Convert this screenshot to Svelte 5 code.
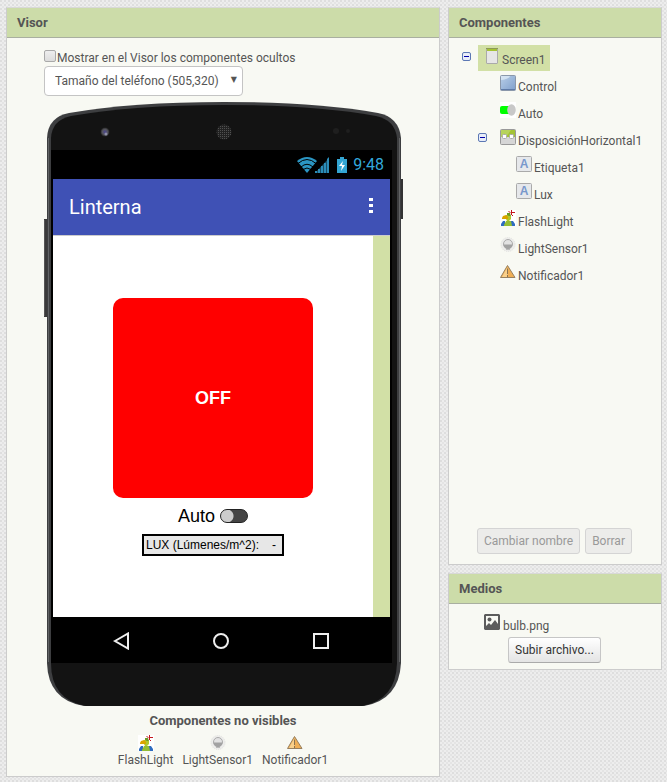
<script>
  let showHidden = $state(false);
  const tree = [
    { name: 'Screen1', icon: 'screen', level: 0, open: true, selected: true },
    { name: 'Control', icon: 'button', level: 1 },
    { name: 'Auto', icon: 'switch', level: 1 },
    { name: 'DisposiciónHorizontal1', icon: 'layout', level: 1, open: true },
    { name: 'Etiqueta1', icon: 'label', level: 2 },
    { name: 'Lux', icon: 'label', level: 2 },
    { name: 'FlashLight', icon: 'flash', level: 1 },
    { name: 'LightSensor1', icon: 'sensor', level: 1 },
    { name: 'Notificador1', icon: 'notifier', level: 1 }
  ];
  const hiddenParts = tree.slice(6);
</script>

{#snippet icon(kind)}
  <svg class="icon" width="16" height="16" viewBox="0 0 16 16" aria-hidden="true">
    {#if kind === 'screen'}
      <rect x="2.5" y=".5" width="11" height="15" rx=".5" fill="#e6e6e6" stroke="#aaa" />
      <rect x="2" y="0" width="12" height="1" fill="#8c9a55" />
      <rect x="3" y="1" width="10" height="2" fill="#a4c334" />
    {:else if kind === 'button'}
      <defs>
        <linearGradient id="blue" x1="0" y1="0" x2="1" y2="1">
          <stop offset="0" stop-color="#b9cfe8" /><stop offset="1" stop-color="#7f9fcc" />
        </linearGradient>
      </defs>
      <rect x=".5" y=".5" width="15" height="15" rx="1" fill="url(#blue)" stroke="#8a97aa" />
      <path d="M1 1h9Q9 4 1 5z" fill="#dce8f5" opacity=".8" />
      <path d="M1 14.500h14" stroke="#5f7ba8" />
    {:else if kind === 'switch'}
      <rect width="16" height="16" fill="#fff" />
      <rect x="0" y="4" width="12" height="8" rx="2" fill="#0f0" />
      <ellipse cx="11.500" cy="8" rx="4.300" ry="5.800" fill="#c8c8c8" />
    {:else if kind === 'layout'}
      <rect x=".5" y=".5" width="15" height="15" rx="1" fill="#d6d6d6" stroke="#999" />
      <path d="M1 1h14v7H1z" fill="#a4c334" />
      <path d="M1 1h10L6 8H1z" fill="#b7d35c" />
      <rect x="2.500" y="5.500" width="4" height="4" rx="1" fill="#fff" stroke="#aaa" />
      <rect x="9.500" y="5.500" width="4" height="4" rx="1" fill="#fff" stroke="#aaa" />
    {:else if kind === 'label'}
      <rect x=".5" y=".5" width="15" height="15" rx="1" fill="#e6e8eb" stroke="#aaa" />
      <text x="8" y="12" text-anchor="middle" class="glyph">A</text>
    {:else if kind === 'flash'}
      <rect width="16" height="16" fill="#fff" />
      <path d="M1 16v-2l2-3 2 0v5zM11 16v-5h2l2 3v2z" fill="#2f6cc0" />
      <path d="M4 16v-1l2-4h5l1 5z" fill="#93bd33" />
      <path d="M6 5h3l2 1v3l-2 2H7L6 9z" fill="#b0c82c" />
      <path d="M3 6l3-1 2 2v2H2V8z" fill="#d9a400" />
      <path d="M7 3h3l1 3H9L7 5z" fill="#6b9b28" />
      <path d="M8.500 1.500l2 1M11.500 4V0M12 2.500h3M11 4l2 2" stroke="#c4161c" fill="none" />
    {:else if kind === 'sensor'}
      <circle cx="8" cy="7.500" r="7" fill="#ededeb" stroke="#e2e2e0" stroke-dasharray="1 1" />
      <circle cx="8" cy="7" r="4.500" fill="#e2e2e2" stroke="#aaa" />
      <path d="M3.500 7.500h9a4.500 4.500 0 0 1-9 0z" fill="#a2a2a2" />
      <path d="M6 12.500h4" stroke="#bbb" />
    {:else}
      <path d="M7.500 1.500L15 13.500H.5z" fill="#efae55" stroke="#97805f" stroke-linejoin="round" />
      <path d="M7.500 3v10H2z" fill="#f9d08b" />
      <path d="M7.500 4.500v5.500M7.500 11v2" stroke="#8a7350" />
    {/if}
  </svg>
{/snippet}

<div class="page">
  <section class="panel visor">
    <h2>Visor</h2>
    <div class="viewer">
      <label class="toggle"><input type="checkbox" bind:checked={showHidden} />Mostrar en el Visor los componentes ocultos</label>
      <div class="size">
        <select aria-label="Tamaño">
          <option>Tamaño del teléfono (505,320)</option>
        </select>
      </div>

      <div class="phone">
        <svg class="shell" width="359" height="605" viewBox="0 0 359 605" aria-hidden="true">
          <defs>
            <radialGradient id="lens"><stop offset="0" stop-color="#4a4590" /><stop offset=".6" stop-color="#55555c" /><stop offset="1" stop-color="#222" /></radialGradient>
            <pattern id="mesh" width="2" height="2" patternUnits="userSpaceOnUse"><rect width="2" height="2" fill="#222" /><rect width="1" height="1" fill="#505050" /></pattern>
          </defs>
          <rect x="0" y="117" width="5" height="98" fill="#3a3a3a" />
          <rect x="0" y="118" width="1" height="96" fill="#555" />
          <rect x="355" y="77" width="4" height="40" fill="#333" />
          <path d="M3 36Q4 15 25 11Q88 0 180 0Q272 0 334 11Q355 15 357 36V561Q355 598 320 604H40Q4 598 3 561Z" fill="#3d3e40" />
          <path d="M7 36Q8 18 27 14Q90 3 180 3Q270 3 332 14Q351 18 353 36V561Q352 598 318 604H42Q7 598 7 561Z" fill="#131313" />
          <path d="M4.500 36V560M355.500 36V560" stroke="#626466" />
          <circle cx="61" cy="30" r="4.500" fill="url(#lens)" />
          <circle cx="62" cy="32" r="1.500" fill="#8e8ea8" />
          <circle cx="180" cy="30" r="7.500" fill="url(#mesh)" />
          <circle cx="292" cy="29" r="3" fill="#1f1f1f" />
          <circle cx="304" cy="29" r="2" fill="#1f1f1f" />
        </svg>

        <div class="display">
          <div class="status">
            <svg width="52" height="18" viewBox="0 0 52 18" aria-hidden="true">
              <path d="M0 5Q10-3 20 5L10 17z" fill="#2b95c2" />
              <path d="M1 7.500Q10-.5 19 7.500M4 11Q10 5.500 16 11M6 13.500Q10 10.500 14 13.500" fill="none" stroke="#000" />
              <path d="M18 17v-2h2v2zM21 17v-4h2v4zM24 17v-7h2v7zM27 17V7h2v10zM30 17V3l2-2v16z" fill="#2b8db8" />
              <path d="M18 17L32 2v15z" fill="#2b8db8" opacity=".55" />
              <path d="M40 3h3V1h4v2h3v14H40z" fill="#33a5d2" />
              <path d="M46 5l-4 5h3l-1 5 4-6h-3z" fill="#fff" />
            </svg>
            <span>9:48</span>
          </div>
          <div class="appbar">
            <span>Linterna</span>
            <button class="more" aria-label="Menú"><i></i><i></i><i></i></button>
          </div>
          <div class="canvas">
            <div class="content">
              <button class="off">OFF</button>
              <label class="auto">Auto <input type="checkbox" class="switch" /></label>
              <div class="lux"><span>LUX (Lúmenes/m^2):</span><span>-</span></div>
            </div>
            <div class="track"></div>
          </div>
          <div class="nav">
            <svg width="18" height="18" viewBox="0 0 18 18" aria-hidden="true"><path d="M3 9L16 1.500V16.500z" /></svg>
            <svg width="18" height="18" viewBox="0 0 18 18" aria-hidden="true"><circle cx="9" cy="9" r="7" /></svg>
            <svg width="18" height="18" viewBox="0 0 18 18" aria-hidden="true"><rect x="2" y="2" width="14" height="14" /></svg>
          </div>
        </div>
      </div>
    </div>

    <div class="hidden-parts">
      <h3>Componentes no visibles</h3>
      <ul>
        {#each hiddenParts as part}
          <li>{@render icon(part.icon)}<span>{part.name}</span></li>
        {/each}
      </ul>
    </div>
  </section>

  <div class="side">
    <section class="panel components">
      <h2>Componentes</h2>
      <ul class="tree">
        {#each tree as node}
          <li class="level{node.level}">
            {#if node.open}
              <button class="fold" aria-label="Contraer {node.name}"></button>
            {/if}
            <span class="node" class:selected={node.selected}>{@render icon(node.icon)}<span>{node.name}</span></span>
          </li>
        {/each}
      </ul>
      <div class="actions">
        <button class="btn" disabled>Cambiar nombre</button>
        <button class="btn" disabled>Borrar</button>
      </div>
    </section>

    <section class="panel media">
      <h2>Medios</h2>
      <div class="file">
        <svg width="16" height="16" viewBox="0 0 16 16" aria-hidden="true">
          <path fill-rule="evenodd" d="M1 0h14l1 1v14l-1 1H1l-1-1V1zM2 2v12h12V2z" fill="#5c5c5c" />
          <path d="M2 12l3-3 2 2 4-5 3 4v5H2z" fill="#5c5c5c" />
          <circle cx="5.500" cy="5.500" r="2" fill="#5c5c5c" />
        </svg>
        <span>bulb.png</span>
      </div>
      <button class="btn upload">Subir archivo...</button>
    </section>
  </div>
</div>

<style>
  :global(body) {
    background-color: #ededed;
    background-image:
      radial-gradient(circle at 1px 1px, #dedede 1px, transparent 1px),
      radial-gradient(circle at 3px 3px, #e4e4e4 1px, transparent 1px);
    background-size: 4px 4px;
  }
  .page {
    display: flex;
    align-items: flex-start;
    gap: 8px;
    padding: 7px 5px 5px 6px;
    color: #555;
    font: 12px/16px Roboto, sans-serif;
  }
  .page * { box-sizing: border-box; }
  button, select { font: inherit; color: inherit; }
  ul { list-style: none; margin: 0; padding: 0; }
  .icon, svg { display: block; flex: none; }
  .panel {
    background: #f8f9f3;
    border: 1px solid #ccc;
    border-top-color: #d8d8d8;
  }
  h2 {
    margin: 0;
    padding: 7px 10px;
    background: #ccdca9;
    border-bottom: 1px solid #a9afa0;
    font-size: 13px;
    line-height: 15px;
    font-weight: 700;
  }
  .visor { flex: 1; min-width: 0; }
  .viewer { padding: 12px 0 0 37px; }
  .toggle { display: flex; height: 16px; }
  .toggle input {
    appearance: none;
    width: 12px;
    height: 12px;
    margin: 0 1px 0 0;
    border: 1px solid #a9a9a9;
    border-radius: 2px;
    background: linear-gradient(#eee, #dcdcdc);
  }
  .size { position: relative; width: 199px; }
  .size::after {
    content: '▼';
    position: absolute;
    right: 6px;
    top: 6px;
    font: 8px/16px "DejaVu Sans", sans-serif;
    pointer-events: none;
  }
  select {
    display: block;
    width: 100%;
    height: 30px;
    padding: 0 10px;
    appearance: none;
    background: #fff;
    border: 1px solid #c4c4c4;
    border-radius: 4px;
  }
  .phone {
    position: relative;
    width: 359px;
    margin-top: 6px;
    padding: 48px 11px 43px 7px;
  }
  .shell { position: absolute; left: 0; top: 0; }
  .display {
    position: relative;
    background: #000;
    padding: 0 2px;
  }
  .status {
    display: flex;
    align-items: center;
    justify-content: flex-end;
    gap: 4px;
    height: 29px;
    padding-right: 6px;
    color: #33a9dc;
    font-size: 16px;
  }
  .appbar {
    display: flex;
    align-items: center;
    justify-content: space-between;
    height: 57px;
    padding: 0 17px 0 16px;
    background: #3f51b5;
    border-bottom: 1px solid #ccc;
    color: #fff;
    font-size: 20px;
    line-height: 24px;
  }
  .more {
    display: flex;
    flex-direction: column;
    gap: 3px;
    padding: 0 0 3px;
    border: 0;
    background: none;
  }
  .more i { width: 4px; height: 3px; background: #fff; }
  .canvas { display: flex; background: #fff; }
  .content {
    flex: 1;
    display: flex;
    flex-direction: column;
    align-items: center;
    padding: 62px 0 61px;
    color: #000;
    font-family: "Liberation Sans", Arial, sans-serif;
  }
  .track { width: 17px; background: #d2e0a6; }
  .off {
    width: 200px;
    height: 200px;
    border: 0;
    border-radius: 10px;
    background: #f00;
    color: #fff;
    font-size: 18px;
    font-weight: 700;
  }
  .auto {
    display: flex;
    align-items: center;
    gap: 5px;
    height: 36px;
    font-size: 18px;
  }
  .switch {
    appearance: none;
    width: 28px;
    height: 14px;
    margin: 0;
    border: 1px solid #222;
    border-radius: 7px;
    background: radial-gradient(circle at 6px 6px, #ccc 6px, #444 7px);
  }
  .lux {
    display: flex;
    justify-content: space-between;
    width: 142px;
    height: 22px;
    padding: 1px 6px 0 2px;
    border: 2px solid #000;
    background: #e7e7e7;
  }
  .nav {
    display: flex;
    justify-content: space-between;
    align-items: center;
    height: 46px;
    padding: 2px 60px 0 59px;
  }
  .nav svg { fill: none; stroke: #eee; stroke-width: 2; }
  .hidden-parts { padding: 6px 0 8px; text-align: center; }
  h3 { margin: 0; font-size: 13px; line-height: 17px; font-weight: 700; }
  .hidden-parts ul { display: flex; justify-content: center; gap: 9px; margin-top: 6px; }
  .hidden-parts li { display: flex; flex-direction: column; align-items: center; gap: 1px; }
  .side { flex: none; width: 214px; display: flex; flex-direction: column; gap: 8px; }
  .components { min-height: 558px; display: flex; flex-direction: column; }
  .tree { flex: 1; padding: 7px 0 0 13px; }
  .tree li { display: flex; align-items: flex-start; gap: 7px; height: 27px; }
  .level1 { padding-left: 32px; }
  .level2 { padding-left: 48px; }
  .level1:has(.fold) { padding-left: 16px; }
  .fold {
    flex: none;
    width: 9px;
    height: 9px;
    margin-top: 7px;
    padding: 0;
    border: 1px solid #5c78b4;
    border-radius: 2px;
    background: linear-gradient(#0000a8, #0000a8) center / 5px 1px no-repeat, #e8edf8;
  }
  .node { display: flex; gap: 2px; height: 26px; padding: 3px 5px 0 6px; }
  .node > span { padding-top: 4px; white-space: nowrap; }
  .selected { background: #d2e0a6; }
  .glyph { font: 700 12px "Liberation Sans", sans-serif; fill: #7898cc; }
  .actions { display: flex; gap: 5px; padding: 0 28px 10px; }
  .btn {
    height: 26px;
    padding: 0 6px;
    border: 1px solid #c6c6c6;
    border-bottom-color: #aaa;
    border-radius: 3px;
    background: linear-gradient(#fff, #e4e4e4);
    color: #333;
    white-space: nowrap;
  }
  .btn:disabled { background: #ececea; border-color: #d4d4d4; color: #999; }
  .file { display: flex; gap: 3px; padding: 10px 0 0 35px; height: 33px; }
  .file span { padding-top: 4px; }
  .upload { display: block; margin: 0 0 6px 59px; }
</style>
